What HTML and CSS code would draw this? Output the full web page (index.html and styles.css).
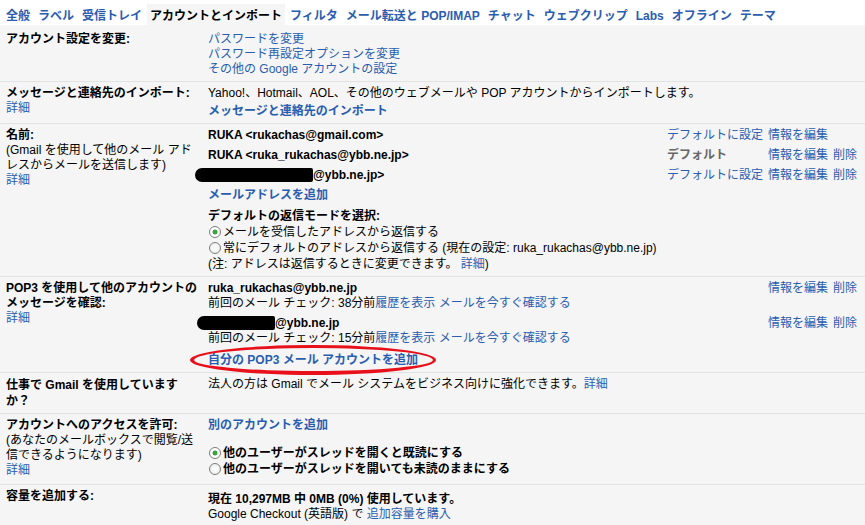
FILE: index.html
```html
<!doctype html>
<html lang="ja">
  <head>
    <meta charset="utf-8">
    <title>設定 - アカウントとインポート</title>
    <link rel="stylesheet" href="styles.css">
  </head>
  <body>
    <div class="tabs">
      <a class="tab" href="#">全般</a>
      <a class="tab" href="#">ラベル</a>
      <a class="tab" href="#">受信トレイ</a>
      <span class="tab active">アカウントとインポート</span>
      <a class="tab" href="#">フィルタ</a>
      <a class="tab" href="#">メール転送と POP/IMAP</a>
      <a class="tab" href="#">チャット</a>
      <a class="tab" href="#">ウェブクリップ</a>
      <a class="tab" href="#">Labs</a>
      <a class="tab" href="#">オフライン</a>
      <a class="tab" href="#">テーマ</a>
    </div>

    <div class="panel">
      <!-- アカウント設定 -->
      <div class="row">
        <div class="label"><b>アカウント設定を変更:</b></div>
        <div class="value">
          <a href="#">パスワードを変更</a><br>
          <a href="#">パスワード再設定オプションを変更</a><br>
          <a href="#">その他の Google アカウントの設定</a>
        </div>
      </div>

      <!-- インポート -->
      <div class="row">
        <div class="label">
          <b>メッセージと連絡先のインポート:</b><br>
          <a href="#">詳細</a>
        </div>
        <div class="value">
          Yahoo!、Hotmail、AOL、その他のウェブメールや POP アカウントからインポートします。
          <div class="gap3"><a class="strong" href="#">メッセージと連絡先のインポート</a></div>
        </div>
      </div>

      <!-- 名前 -->
      <div class="row">
        <div class="label">
          <b>名前:</b><br>
          (Gmail を使用して他のメール アド<br>
          レスからメールを送信します)<br>
          <a href="#">詳細</a>
        </div>
        <div class="value">
          <div class="addr">
            <b>RUKA &lt;rukachas@gmail.com&gt;</b>
            <a href="#">デフォルトに設定</a>
            <a href="#">情報を編集</a>
            <span></span>
          </div>
          <div class="addr">
            <b>RUKA &lt;ruka_rukachas@ybb.ne.jp&gt;</b>
            <b class="muted">デフォルト</b>
            <a href="#">情報を編集</a>
            <a href="#">削除</a>
          </div>
          <div class="addr">
            <b><span class="redact wide"></span>@ybb.ne.jp&gt;</b>
            <a href="#">デフォルトに設定</a>
            <a href="#">情報を編集</a>
            <a href="#">削除</a>
          </div>
          <div class="addr">
            <a class="strong" href="#">メールアドレスを追加</a>
          </div>
          <div class="reply">
            <b>デフォルトの返信モードを選択:</b><br>
            <span class="radio on"></span>メールを受信したアドレスから返信する<br>
            <span class="radio"></span>常にデフォルトのアドレスから返信する (現在の設定: ruka_rukachas@ybb.ne.jp)<br>
            (注: アドレスは返信するときに変更できます。 <a href="#">詳細</a>)
          </div>
        </div>
      </div>

      <!-- POP3 -->
      <div class="row">
        <div class="label">
          <b>POP3 を使用して他のアカウントの<br>メッセージを確認:</b><br>
          <a href="#">詳細</a>
        </div>
        <div class="value">
          <div class="pop">
            <div class="addr">
              <b>ruka_rukachas@ybb.ne.jp</b>
              <span></span>
              <a href="#">情報を編集</a>
              <a href="#">削除</a>
            </div>
            前回のメール チェック: 38分前<a href="#">履歴を表示</a> <a href="#">メールを今すぐ確認する</a>
          </div>
          <div class="pop">
            <div class="addr">
              <b><span class="redact narrow"></span>@ybb.ne.jp</b>
              <span></span>
              <a href="#">情報を編集</a>
              <a href="#">削除</a>
            </div>
            前回のメール チェック: 15分前<a href="#">履歴を表示</a> <a href="#">メールを今すぐ確認する</a>
          </div>
          <div class="add-pop">
            <a class="strong circled" href="#">自分の POP3 メール アカウントを追加</a>
          </div>
        </div>
      </div>

      <!-- 仕事で Gmail -->
      <div class="row loose">
        <div class="label"><b>仕事で Gmail を使用しています<br>か？</b></div>
        <div class="value">
          法人の方は Gmail でメール システムをビジネス向けに強化できます。<a href="#">詳細</a>
        </div>
      </div>

      <!-- アクセス許可 -->
      <div class="row tall">
        <div class="label">
          <b>アカウントへのアクセスを許可:</b><br>
          (あなたのメールボックスで閲覧/送<br>
          信できるようになります)<br>
          <a href="#">詳細</a>
        </div>
        <div class="value">
          <a class="strong" href="#">別のアカウントを追加</a>
          <div class="access">
            <span class="radio on"></span>他のユーザーがスレッドを開くと既読にする<br>
            <span class="radio"></span>他のユーザーがスレッドを開いても未読のままにする
          </div>
        </div>
      </div>

      <!-- 容量 -->
      <div class="row last">
        <div class="label"><b>容量を追加する:</b></div>
        <div class="value gap3">
          <b>現在 10,297MB 中 0MB (0%) 使用しています。</b><br>
          Google Checkout (英語版) で <a href="#">追加容量を購入</a>
        </div>
      </div>
    </div>
  </body>
</html>
```

FILE: styles.css
```css
* {
  margin: 0;
  padding: 0;
  box-sizing: border-box;
}

body {
  font-family: "Liberation Sans", "Noto Sans CJK JP", sans-serif;
  font-size: 12px;
  line-height: 15px;
  color: #000;
  background: #f5f5f5;
}

a {
  color: #2a5db0;
  text-decoration: none;
}

b,
.strong {
  font-weight: bold;
}

/* tabs */

.tabs {
  display: flex;
  gap: 2px;
  background: #fff;
  padding: 4px 0 0 3px;
  height: 25px;
}

.tab {
  padding: 5px 3px 1px;
  font-weight: bold;
  font-size: 12px;
  line-height: 15px;
  white-space: nowrap;
}

.tab.active {
  background: #f5f5f5;
  color: #000;
}

/* settings rows */

.panel {
  padding-top: 3px;
}

.row {
  display: grid;
  grid-template-columns: 202px 1fr;
  padding: 4px 8px 4px 6px;
  border-bottom: 1px solid #e2e2e2;
}

.row.loose .label {
  line-height: 16px;
}

.row.tall {
  padding-bottom: 6px;
}

.row.last {
  border-bottom: none;
}

.gap3 {
  margin-top: 3px;
}

.addr {
  display: grid;
  grid-template-columns: 1fr 101px 65px 24px;
  margin-bottom: 5px;
  white-space: nowrap;
}

.pop {
  margin-bottom: 5px;
}

.pop .addr {
  margin-bottom: 0;
}

.add-pop {
  margin-top: 7px;
}

.muted {
  color: #666;
}

.reply {
  margin-top: 2px;
  line-height: 16px;
}

.access {
  margin-top: 12px;
  font-weight: bold;
  line-height: 16px;
}

.radio {
  display: inline-block;
  width: 12px;
  height: 12px;
  border: 1px solid #7d7d7d;
  border-radius: 50%;
  background: radial-gradient(circle, #fff 0, #e9e9e9 100%);
  vertical-align: -2px;
  margin: 0 2px 0 1px;
}

.radio.on {
  background: radial-gradient(circle, #3aa53a 0 2.2px, #fff 2.8px);
}

/* blacked-out addresses */

.redact {
  display: inline-block;
  height: 14px;
  background: #000;
  border-radius: 7px 2px 2px 7px;
  vertical-align: -3px;
}

.redact.wide {
  width: 118px;
  margin-left: -13px;
}

.redact.narrow {
  width: 78px;
  margin-left: -11px;
}

/* red hand-drawn ellipse */

.circled {
  position: relative;
  display: inline-block;
  line-height: 15px;
}

.circled::after {
  content: "";
  position: absolute;
  left: -18px;
  right: -18px;
  top: -8px;
  bottom: -7px;
  border: 3px solid #e8101a;
  border-width: 3px 3px 4px 4px;
  border-radius: 50%;
}
```
